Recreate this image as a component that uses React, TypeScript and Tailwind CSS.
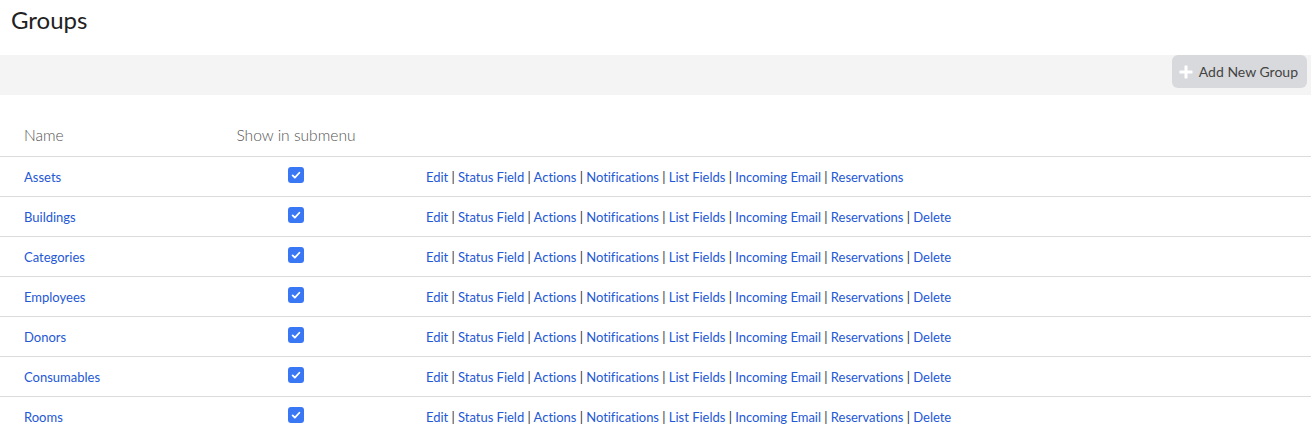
const groups = [
  { name: "Assets", canDelete: false },
  { name: "Buildings", canDelete: true },
  { name: "Categories", canDelete: true },
  { name: "Employees", canDelete: true },
  { name: "Donors", canDelete: true },
  { name: "Consumables", canDelete: true },
  { name: "Rooms", canDelete: true },
];

const baseActions = ["Edit", "Status Field", "Actions", "Notifications", "List Fields", "Incoming Email", "Reservations"];

function Check() {
  return (
    <span className="inline-flex h-4 w-4 items-center justify-center rounded-[3px] bg-[#3a77f5]">
      <svg viewBox="0 0 16 16" className="h-3 w-3" fill="none" stroke="white" strokeWidth="2.4" strokeLinecap="round" strokeLinejoin="round">
        <path d="M3.5 8.5l3 3 6-6.5" />
      </svg>
    </span>
  );
}

export default function App() {
  return (
    <div className="min-h-screen bg-white font-['Lato','Noto_Sans',sans-serif] text-[#222]">
      {/* Header */}
      <h1 className="px-[11px] pt-[4px] text-[24px] leading-[31px] font-normal">Groups</h1>

      {/* Toolbar */}
      <div className="mt-[20px] flex h-[40px] items-start justify-end bg-[#f4f4f4] pr-[4px]">
        <button className="flex h-[33px] items-center gap-[6px] rounded-[6px] bg-[#d8d9dc] pl-[7px] pr-[9px] text-[14px] text-[#444]">
          <svg viewBox="0 0 14 14" className="h-[14px] w-[14px]" fill="white">
            <rect x="5.5" y="0.5" width="3" height="13" rx="0.5" />
            <rect x="0.5" y="5.5" width="13" height="3" rx="0.5" />
          </svg>
          Add New Group
        </button>
      </div>

      {/* Table */}
      <table className="mt-[20px] w-full table-fixed border-collapse">
        <thead>
          <tr className="h-[41px] text-[15.6px] text-[#555]">
            <th className="w-[212px] pl-[24px] text-left font-light">Name</th>
            <th className="w-[168px] text-center font-light">Show in submenu</th>
            <th className="font-light"></th>
          </tr>
        </thead>
        <tbody>
          {groups.map((g) => {
            const actions = g.canDelete ? [...baseActions, "Delete"] : baseActions;
            return (
              <tr key={g.name} className="h-[40px] border-t border-[#dcdcdc] text-[13px]">
                <td className="pl-[24px] pt-[3px]">
                  <a href="#" className="text-[#2458d6]">{g.name}</a>
                </td>
                <td className="pt-[1px] text-center align-middle">
                  <span className="inline-flex">
                    <Check />
                  </span>
                </td>
                <td className="pl-[46px] pt-[3px] tracking-[-0.02px] text-[#333]">
                  {actions.map((a, i) => (
                    <span key={a}>
                      {i > 0 && " | "}
                      <a href="#" className="text-[#2458d6]">{a}</a>
                    </span>
                  ))}
                </td>
              </tr>
            );
          })}
        </tbody>
      </table>
    </div>
  );
}
